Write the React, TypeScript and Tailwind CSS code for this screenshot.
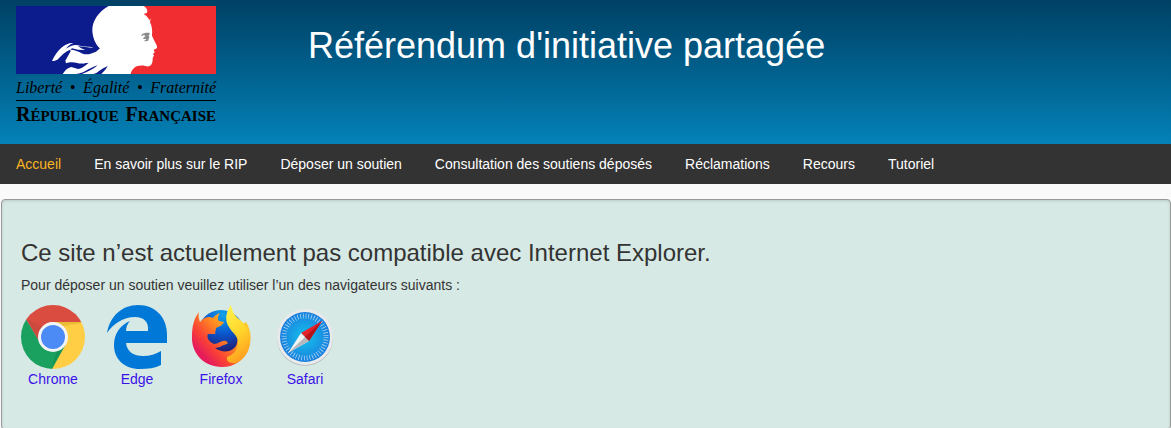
const menu = [
  "Accueil",
  "En savoir plus sur le RIP",
  "Déposer un soutien",
  "Consultation des soutiens déposés",
  "Réclamations",
  "Recours",
  "Tutoriel",
];

const Marianne = () => (
  <svg viewBox="-102 18 600 204" className="block h-[68px] w-full" aria-hidden="true">
    <rect x="-102" y="18" width="300" height="204" fill="#0c1c8c" />
    <rect x="198" y="18" width="300" height="204" fill="#f12d31" />
    <path
      fill="#fff"
      d="M176 18H281C290 24 295 32 290 39L281 42C289 47 295 53 298 61L302 55L300 67C305 76 308 90 306 107C311 120 319 131 321 139C323 147 315 147 311 150L314 157L309 162L312 167C306 173 309 180 307 187C303 201 295 200 286 198C272 195 260 197 253 203C246 209 243 216 242 222H154C162 214 168 208 173 198C164 203 152 208 146 214C140 220 134 222 128 222H96C112 215 130 208 143 196C132 200 118 206 106 213C98 218 86 222 76 222H38C44 212 52 204 64 201L84 207C96 206 108 196 118 186C106 190 92 193 80 188C70 183 60 186 48 190L46 182C52 172 56 164 62 154L60 149C46 155 34 166 24 178C18 182 11 184 6 183C12 168 24 152 36 142C46 133 58 128 70 129C58 134 52 140 48 146C62 136 76 132 90 137C104 141 122 138 132 144L147 143C136 130 128 112 127 92C126 64 146 34 176 18Z"
    />
    <path
      fill="#0c1c8c"
      d="M60 150C68 148 78 154 88 156C98 163 110 165 122 161L138 155L150 145L136 136L128 143C114 142 102 141 84 138L92 144L106 150L84 149L66 145Z"
    />
    <path
      fill="#fff"
      d="M62 156C72 156 84 160 92 166C104 172 124 168 144 158L148 160C140 172 130 184 116 188C98 192 80 186 60 187L50 184C54 174 58 164 62 156Z"
    />
    <path fill="#8b8b8b" d="M274 105C282 98 291 98 299 99V103L296 106L298 112L294 123L281 124L290 117L278 116L287 107L280 105L276 109Z" />
  </svg>
);

const Chrome = () => (
  <svg viewBox="0 0 64 64" className="size-16" aria-hidden="true">
    <defs>
      <clipPath id="chrome-disc">
        <circle cx="32" cy="32" r="32" />
      </clipPath>
    </defs>
    <g clipPath="url(#chrome-disc)">
      <path fill="#ffce44" d="M32 17H64V64H30L45 38Z" />
      <path fill="#1aa15f" d="M5 14L20 39L32 46L45 39L30 66H0V14Z" />
      <path fill="#da4c40" d="M5 14L0 0H64V17H32C25 17 19 23 18 36Z" />
      <path fill="#12834c" opacity=".5" d="M43 41L30 64L36 46Z" />
      <path fill="#a93c33" opacity=".25" d="M5 14L18 36C17 31 19 25 22 22Z" />
      <path fill="#c99f24" opacity=".4" d="M32 17H60V18L42 21Z" />
    </g>
    <circle cx="32" cy="32" r="15" fill="#f3f4f6" />
    <circle cx="32" cy="32" r="12" fill="#4c8bf5" />
  </svg>
);

const Edge = () => (
  <svg viewBox="0 0 64 64" className="size-16" aria-hidden="true">
    <path
      fill="#0078d7"
      d="M2 28C5 11 17 0 33 0C51 0 62 13 62 29V38H21C22 47 29 51 38 51C45 51 51 49 56 46V60C50 63 43 64 35 64C19 64 9 54 9 40C9 29 15 20 25 16C22 19 21 23 21 26H43C44 17 39 12 30 12C18 12 8 19 2 28Z"
    />
  </svg>
);

const Firefox = () => (
  <svg viewBox="0 0 64 64" className="size-16" aria-hidden="true">
    <defs>
      <radialGradient id="fox-globe" cx=".55" cy=".1" r=".85">
        <stop offset="0" stopColor="#10a4ec" />
        <stop offset=".5" stopColor="#0a55cc" />
        <stop offset="1" stopColor="#231766" />
      </radialGradient>
      <linearGradient id="fox-body" x1=".8" y1=".1" x2=".1" y2=".7">
        <stop offset="0" stopColor="#ffc62e" />
        <stop offset=".4" stopColor="#ff9021" />
        <stop offset=".75" stopColor="#fa4334" />
        <stop offset="1" stopColor="#e51b5c" />
      </linearGradient>
      <linearGradient id="fox-tail" x1=".3" y1="0" x2=".6" y2="1">
        <stop offset="0" stopColor="#fff14a" />
        <stop offset=".5" stopColor="#ffd52b" />
        <stop offset="1" stopColor="#ff9a1d" />
      </linearGradient>
    </defs>
    <circle cx="32" cy="28" r="23" fill="url(#fox-globe)" />
    <path
      fill="url(#fox-body)"
      d="M10 7C9 11 10 14 11 17C15 12 20 11 24 13C26 10 29 9 31 8C29 11 28 14 30 16L35 17C34 20 30 22 27 23L26 29L19 29C17 32 20 37 25 39C30 39 32 35 37 36L39 38C37 40 33 40 31 42L26 43C34 49 46 47 48 38L52 20L57 17C63 26 63 39 58 46C54 56 45 62 33 62C15 62 2 48 3 31C3 22 5 13 10 7Z"
    />
    <path
      fill="url(#fox-tail)"
      d="M42 0C36 8 36 16 40 22C43 28 49 30 49 38C49 45 44 50 38 52C37 56 41 59 47 58C56 54 62 45 61 33C60 25 56 19 51 15C46 11 43 7 42 0Z"
    />
  </svg>
);

const Safari = () => (
  <svg viewBox="0 0 64 64" className="size-16" aria-hidden="true">
    <defs>
      <radialGradient id="safari-dial" cx=".5" cy=".5" r=".55">
        <stop offset="0" stopColor="#14c4ec" />
        <stop offset="1" stopColor="#1b78dc" />
      </radialGradient>
    </defs>
    <circle cx="32" cy="33" r="28" fill="#b9bec1" />
    <circle cx="32" cy="32" r="28" fill="#e9eaec" />
    <circle cx="32" cy="32" r="25" fill="url(#safari-dial)" />
    <circle cx="32" cy="32" r="21" fill="none" stroke="#fff" strokeOpacity=".7" strokeWidth="5" strokeDasharray="0.7 2.05" />
    <path fill="#e4232b" d="M49 16L28 28L36 36Z" />
    <path fill="#f3f3f3" d="M15 48L28 28L36 36Z" />
    <path fill="#b5b9bd" d="M15 48L32 32L36 36Z" />
    <path fill="#b3151b" d="M49 16L32 32L36 36Z" />
  </svg>
);

const browsers = [
  { name: "Chrome", Icon: Chrome },
  { name: "Edge", Icon: Edge },
  { name: "Firefox", Icon: Firefox },
  { name: "Safari", Icon: Safari },
];

const App = () => {
  return (
    <div className="bg-[#fafafa] font-['Liberation_Sans',Arial,sans-serif] text-sm text-[#333]">
      <header className="flex items-start bg-linear-to-b from-[#004165] to-[#0482b8] px-4 pt-1.5 pb-4">
        <div className="w-[200px] font-['Liberation_Serif',serif] text-black">
          <Marianne />
          <p className="mt-1.5 flex justify-between border-b border-black pb-1 text-base leading-4 italic">
            <span>Liberté</span>
            <span>•</span>
            <span>Égalité</span>
            <span>•</span>
            <span>Fraternité</span>
          </p>
          <p className="mt-px flex justify-between text-[15px] leading-6 font-bold">
            <span>
              <span className="text-xl leading-6">R</span>ÉPUBLIQUE
            </span>
            <span>
              <span className="text-xl leading-6">F</span>RANÇAISE
            </span>
          </p>
        </div>
        <h1 className="ml-[92px] pt-5 text-4xl leading-10 text-white">Référendum d'initiative partagée</h1>
      </header>

      <nav className="bg-[#333]">
        <ul className="flex gap-px">
          {menu.map((item, i) => (
            <li key={item}>
              <a href="#" className={`block px-4 py-2.5 leading-5 ${i === 0 ? "text-[#fcb322]" : "text-white"}`}>
                {item}
              </a>
            </li>
          ))}
        </ul>
      </nav>

      <main className="mt-[15px] ml-px rounded-sm border border-[#999] bg-[#d7e9e4] px-[19px] pt-[35px] pb-10 shadow-[inset_0_1px_3px_#0002]">
        <h2 className="text-2xl leading-9">Ce site n’est actuellement pas compatible avec Internet Explorer.</h2>
        <p className="mt-1 leading-5">Pour déposer un soutien veuillez utiliser l’un des navigateurs suivants :</p>
        <ul className="mt-2.5 flex gap-5">
          {browsers.map(({ name, Icon }) => (
            <li key={name}>
              <a href="#" className="flex flex-col items-center leading-5 text-[#3a12e8]">
                <Icon />
                {name}
              </a>
            </li>
          ))}
        </ul>
      </main>
    </div>
  );
};

export default App;
